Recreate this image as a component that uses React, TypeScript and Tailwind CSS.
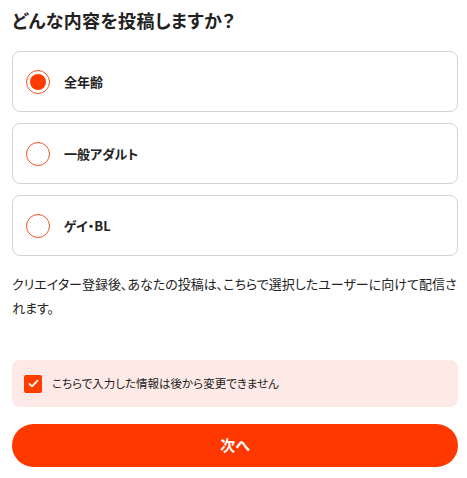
import { useState } from 'react'

const OPTIONS = [
  { id: 'all', label: '全年齢' },
  { id: 'adult', label: '一般アダルト' },
  { id: 'bl', label: 'ゲイ・BL' },
]

export default function App() {
  const [selected, setSelected] = useState('all')
  const [agreed, setAgreed] = useState(true)

  return (
    <div
      className="w-[467px] h-[478px] bg-white pl-3 pr-[9px] pt-[8px] text-[#222] [font-feature-settings:'palt']"
      style={{ fontFamily: '"Noto Sans CJK JP", "Noto Sans", sans-serif' }}
    >
      <h1 className="text-[18px] font-bold leading-[24px] tracking-[0.02em]">どんな内容を投稿しますか？</h1>

      {/* Options */}
      <div className="mt-[19px] flex flex-col gap-[11px]">
        {OPTIONS.map((opt) => (
          <button
            key={opt.id}
            onClick={() => setSelected(opt.id)}
            className="flex h-[61px] w-full items-center gap-[14px] rounded-lg border border-[#d4d4d4] bg-white px-[13px] text-left"
          >
            <span className="flex h-[24px] w-[24px] items-center justify-center rounded-full border-[1.5px] border-[#f0512c]">
              {selected === opt.id && <span className="h-[16px] w-[16px] rounded-full bg-[#ff3c00]" />}
            </span>
            <span className="text-[13px] font-bold">{opt.label}</span>
          </button>
        ))}
      </div>

      <p className="mt-[16px] text-[13px] leading-[24px]">
        クリエイター登録後、あなたの投稿は、こちらで選択したユーザーに向けて配信されます。
      </p>

      {/* Agreement */}
      <label className="mt-[40px] flex h-[47px] items-center gap-[10px] rounded-lg bg-[#fde9e5] px-[12px]">
        <input type="checkbox" className="hidden" checked={agreed} onChange={() => setAgreed(!agreed)} />
        <span className="flex h-[18px] w-[18px] items-center justify-center rounded-[2px] bg-[#ff3c00]">
          {agreed && (
            <svg viewBox="0 0 16 16" className="h-[13px] w-[13px]" fill="none" stroke="white" strokeWidth={2.2} strokeLinecap="round" strokeLinejoin="round">
              <path d="M3 8.5l3.2 3L13 4.5" />
            </svg>
          )}
        </span>
        <span className="text-[11.5px]">こちらで入力した情報は後から変更できません</span>
      </label>

      <button className="mt-[17px] flex h-[43px] w-full items-center justify-center rounded-full bg-[#ff3800] text-[15px] font-bold text-white">
        次へ
      </button>
    </div>
  )
}
